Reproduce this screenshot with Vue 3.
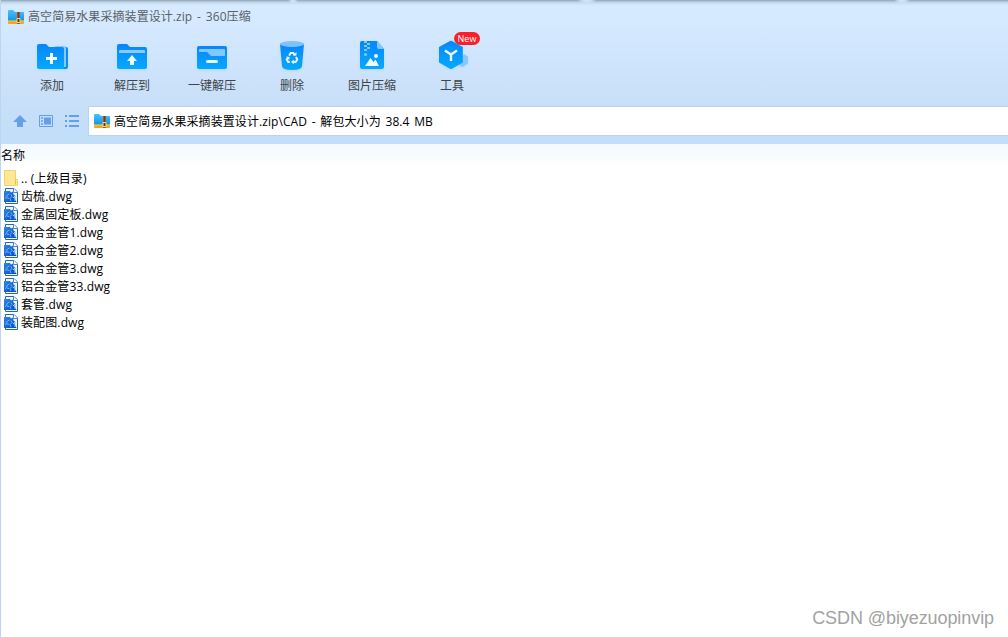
<script setup>
import { ref } from 'vue'

const archive = '高空简易水果采摘装置设计.zip'

const tools = [
  { id: 'add', label: '添加' },
  { id: 'extract', label: '解压到' },
  { id: 'quick', label: '一键解压' },
  { id: 'delete', label: '删除' },
  { id: 'image', label: '图片压缩' },
  { id: 'tools', label: '工具', badge: 'New' },
]

const files = [
  '齿梳.dwg',
  '金属固定板.dwg',
  '铝合金管1.dwg',
  '铝合金管2.dwg',
  '铝合金管3.dwg',
  '铝合金管33.dwg',
  '套管.dwg',
  '装配图.dwg',
]

const selected = ref(null)
</script>

<template>
  <div class="window">
    <!-- Shared gradients and symbols -->
    <svg class="defs" width="0" height="0" aria-hidden="true">
      <defs>
        <linearGradient id="blue" x1="0" y1="0" x2="0" y2="1">
          <stop offset="0" stop-color="#0786fb" />
          <stop offset="1" stop-color="#05a9ff" />
        </linearGradient>
        <linearGradient id="folder" x1="0" y1="0" x2="0" y2="1">
          <stop offset="0" stop-color="#45c4fb" />
          <stop offset="1" stop-color="#1a90ea" />
        </linearGradient>
        <linearGradient id="dwg" x1="0" y1="0" x2="1" y2="1">
          <stop offset="0" stop-color="#2f86ee" />
          <stop offset="1" stop-color="#0448c4" />
        </linearGradient>
        <symbol id="zip" viewBox="0 0 16 14">
          <path d="M0 1Q0 0 1 0h4l2 2h8q1 0 1 1v8H0z" fill="url(#folder)" />
          <path d="M0 10h16v1.5H0z" fill="#8cc63a" />
          <path d="M0 11.5h16V13q0 1-1 1H1q-1 0-1-1z" fill="#f7a128" />
          <path d="M9 2h3v12H9z" fill="#a95820" />
          <path d="M10 2h1v7h-1z" fill="#6b3d22" />
          <path d="M9 8.5h3v4H9z" fill="#55391e" stroke="#ffd98a" />
        </symbol>
        <symbol id="drawing" viewBox="0 0 14 16">
          <path d="M1.5.5h8.5l3.5 3.5v11.5h-12z" fill="#eff7ff" stroke="#2565bd" />
          <path d="M9.5.5v4h4" fill="#fff" stroke="#4d86cf" />
          <path d="M0 3h6l1 1.5 2-1 .5 3 2 1.5-1 2 2 4H0z" fill="url(#dwg)" />
          <path d="M1.5 11l2-4 2-1M7 6.5l1 2-2 2 1 2.5M3 10l2 .5" fill="none" stroke="#78bcfb" stroke-width=".9" />
          <path d="M9 10l2-2v5" fill="none" stroke="#a5d4ff" />
        </symbol>
      </defs>
    </svg>

    <header class="header">
      <div class="titlebar">
        <svg class="zip-icon" width="16" height="14"><use href="#zip" /></svg>
        <span class="title">{{ archive }} - 360压缩</span>
      </div>

      <nav class="toolbar">
        <button v-for="tool in tools" :key="tool.id" class="tool" :class="tool.id">
          <svg class="tool-icon" width="34" height="34" viewBox="0 0 34 34">
            <template v-if="tool.id === 'add'">
              <path d="M5 7h26q2 0 2 2v18q0 2-2 2H10z" fill="#078efb" />
              <path d="M20 6h9q2 0 2 2v19h-4z" fill="#88c9ff" />
              <path d="M2 6q0-2 2-2h7l3 3h13q2 0 2 2v20H4q-2 0-2-2z" fill="url(#blue)" />
              <path d="M16.5 13v11M11 18.5h11" stroke="#f3fbff" stroke-width="3" />
            </template>
            <template v-else-if="tool.id === 'extract'">
              <path d="M2 6q0-2 2-2h8l3 3h15q2 0 2 2v18q0 2-2 2H4q-2 0-2-2z" fill="url(#blue)" />
              <path d="M4 13v-2q0-1 1-1h24q1 0 1 1v2z" fill="#8acaff" />
              <path d="M17 15l5 6h-3v4h-4v-4h-3z" fill="#effaff" />
            </template>
            <template v-else-if="tool.id === 'quick'">
              <rect x="2" y="6" width="30" height="23" rx="2" fill="url(#blue)" />
              <path d="M4 12v-2q0-1 1-1h24q1 0 1 1v6H16l-4-4z" fill="#83c7ff" />
              <path d="M12.5 21.5h9" stroke="#effaff" stroke-width="3" stroke-linecap="round" />
            </template>
            <template v-else-if="tool.id === 'delete'">
              <path d="M5 4h24l-2 22q0 4-10 4T7 26z" fill="url(#blue)" />
              <ellipse cx="17" cy="4" rx="12" ry="3" fill="#7ec3ff" />
              <g fill="none" stroke="#e7f8ff" stroke-width="2">
                <path d="M14.2 15.6l1.4-2.6h2.8l1.4 2.5M21 17l1.3 2.5-1.7 2.5h-2.4M14.8 22h-1.6l-1.5-2.4 1.3-2.2" />
              </g>
              <path d="M18 15.5h3.5V12zM18.8 19.6v4.6l-2.8-2.2zM11 16.6l3.6.4-.4 3z" fill="#e7f8ff" />
            </template>
            <template v-else-if="tool.id === 'image'">
              <path d="M5 3q0-2 2-2h15l7 8v18q0 2-2 2H7q-2 0-2-2z" fill="url(#blue)" />
              <path d="M22 1v6q0 2 2 2h5z" fill="#83c7ff" />
              <path d="M9 1h3v2H9zM12 3h3v2h-3zM9 5h3v2H9zM12 7h3v2h-3zM9 9h3v2H9z" fill="#7cc8ff" />
              <circle cx="10.5" cy="14.5" r="1.6" fill="#7cc8ff" />
              <path d="M10 26l5.5-8 3 4 2-2.5L24 26z" fill="#effaff" />
              <circle cx="21" cy="16" r="2" fill="#effaff" />
            </template>
            <template v-else>
              <path d="M29 14l4 2.5v7L27.5 27 22 24z" fill="#86c9ff" />
              <path d="M15 1q1-.6 2 0l10.8 6v15.5L17 28.7q-1 .6-2 0L4 22.5V7z" fill="url(#blue)" />
              <path d="M10 10.5l6 4 6-4M16 14.5V21" fill="none" stroke="#ecf9ff" stroke-width="2.4" />
            </template>
          </svg>
          <span class="tool-label">{{ tool.label }}</span>
          <span v-if="tool.badge" class="badge">{{ tool.badge }}</span>
        </button>
      </nav>

      <div class="navigation">
        <div class="nav-icons">
          <svg width="14" height="14" viewBox="0 0 14 14" fill="#659fec">
            <path d="M7 1l7 7h-4v5H4V8H0z" />
          </svg>
          <svg width="14" height="14" viewBox="0 0 14 14" fill="none" stroke="#659fec">
            <path d="M.5 1.5h13v11H.5z" />
            <path d="M5 3.5h7v7H5z" fill="#659fec" stroke="none" />
            <path d="M2 4h2M2 7h2M2 10h2" stroke-width="1.5" />
          </svg>
          <svg width="14" height="14" viewBox="0 0 14 14" stroke="#659fec" stroke-width="2">
            <path d="M0 2h2M4 2h10M0 7h2M4 7h10M0 12h2M4 12h10" />
          </svg>
        </div>
        <div class="address">
          <svg class="zip-icon" width="16" height="14"><use href="#zip" /></svg>
          <span class="path">{{ archive }}\CAD - 解包大小为 38.4 MB</span>
        </div>
      </div>
    </header>

    <main class="content">
      <div class="column-head">名称</div>
      <ul class="file-list">
        <li class="file parent">
          <svg width="14" height="16" viewBox="0 0 14 16">
            <path d="M.5.5h11v9h2v6H.5z" fill="#ffe794" stroke="#efd272" />
            <path d="M11.5 9.5v5" stroke="#dfbf56" />
          </svg>
          <span>.. (上级目录)</span>
        </li>
        <li
          v-for="file in files"
          :key="file"
          class="file"
          :class="{ selected: selected === file }"
          @click="selected = file"
        >
          <svg width="14" height="16"><use href="#drawing" /></svg>
          <span>{{ file }}</span>
        </li>
      </ul>
    </main>
    <div class="watermark">CSDN @biyezuopinvip</div>
  </div>
</template>

<style>
body { margin: 0; overflow: hidden; }
</style>

<style scoped>
.window {
  position: relative;
  box-sizing: border-box;
  height: 100vh;
  border-left: 1px solid #bcd6f2;
  background: white;
  color: #000;
  font: 12px/18px "Open Sans", "Noto Sans CJK SC", sans-serif;
  overflow: hidden;
}
.defs { position: absolute; }

.header {
  box-sizing: border-box;
  height: 144px;
  display: flex; flex-direction: column;
  background:
    radial-gradient(ellipse 10px 5px at 586px 0, #cce3ff 35%, transparent),
    radial-gradient(ellipse 8px 5px at 901px 0, #cce3ff 35%, transparent),
    radial-gradient(ellipse 5px 4px at 292px 1px, #cce3ff 25%, transparent),
    linear-gradient(#8fa4b8 0, #a6b9cb 1px, #bed1e3 2px, #d0e4f7 4px, transparent 6px),
    linear-gradient(#d6ebff 0, #d5eaff 20px, #cfe5fd 58px, #c9e0f8 96px, #c3def9 135px);
}

.titlebar {
  height: 34px;
  padding-left: 7px;
  display: flex; align-items: center; gap: 4px;
  color: #5b6066;
}
.title { letter-spacing: 0.07px; word-spacing: 1.6px; }
.zip-icon { flex: none; }

.toolbar {
  height: 72px;
  padding-left: 11px;
  display: flex;
}
.tool {
  position: relative;
  width: 80px; height: 64px;
  padding: 6px 0 0;
  display: flex; flex-direction: column; align-items: center;
  border: 0;
  background: none;
  color: #404347;
  font: inherit;
}
.tool-icon { overflow: visible; filter: drop-shadow(0 1px 1px #8bc6f750); }
.tool-label { margin-top: 3px; }
.badge {
  position: absolute; left: 42px; top: -2px;
  width: 26px; height: 13px;
  border-radius: 7px;
  background: #f91f2b;
  color: white;
  font-size: 9px; line-height: 13px;
  text-align: center;
}

.navigation {
  height: 30px;
  display: flex;
}
.nav-icons {
  width: 87px;
  padding-left: 12px;
  box-sizing: border-box;
  display: flex; align-items: center; gap: 12px;
}
.address {
  box-sizing: border-box;
  flex: 1;
  padding-left: 5px;
  display: flex; align-items: center; gap: 4px;
  border: 1px solid #b7d4f2;
  border-right: 0;
  background: white;
}
.path { padding-top: 1px; letter-spacing: 0.08px; word-spacing: 1.5px; }

.column-head {
  height: 25px;
  line-height: 24px;
  background: linear-gradient(#f3f9ff, #f9fcff 14px, white 22px);
}
.file-list {
  margin: 0; padding: 0;
  list-style: none;
}
.file {
  height: 18px;
  padding-left: 3px;
  display: flex; align-items: center; gap: 3px;
  letter-spacing: 0.12px;
}
.file svg { flex: none; margin-bottom: 2px; }
.parent { height: 19px; }
.selected { background: #d7eaff; }

.watermark {
  position: absolute; right: 14px; bottom: 7px;
  color: #a2a2a2;
  font: 18px/24px "Liberation Sans", sans-serif;
  letter-spacing: -0.08px;
}
</style>
